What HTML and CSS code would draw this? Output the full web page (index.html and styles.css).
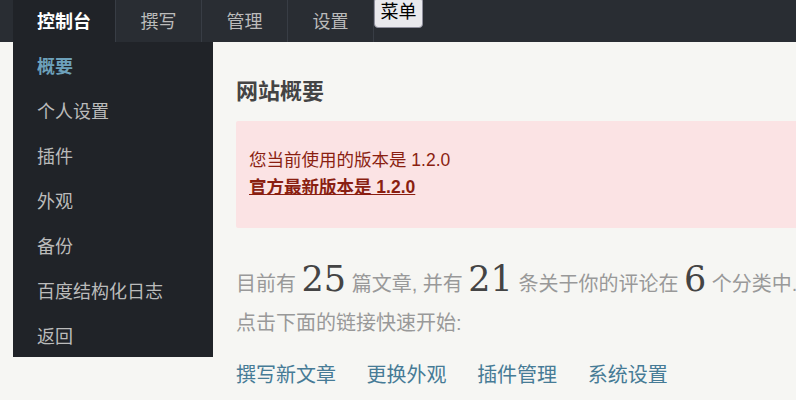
FILE: index.html
```html
<!DOCTYPE html>
<html lang="zh-CN">
<head>
<meta charset="utf-8">
<title>控制台</title>
<link rel="stylesheet" href="styles.css">
</head>
<body>
<header class="head-nav">
  <nav class="tabs">
    <a class="tab focus" href="#">控制台</a>
    <a class="tab" href="#">撰写</a>
    <a class="tab" href="#">管理</a>
    <a class="tab" href="#">设置</a>
  </nav>
  <button class="menu-btn" type="button">菜单</button>
</header>
<div class="layout">
  <ul class="dropdown">
    <li class="item focus"><a href="#">概要</a></li>
    <li class="item"><a href="#">个人设置</a></li>
    <li class="item"><a href="#">插件</a></li>
    <li class="item"><a href="#">外观</a></li>
    <li class="item"><a href="#">备份</a></li>
    <li class="item"><a href="#">百度结构化日志</a></li>
    <li class="item"><a href="#">返回</a></li>
  </ul>
  <main class="content">
    <h2 class="title">网站概要</h2>
    <div class="message">
      <p class="msg-line">您当前使用的版本是 1.2.0</p>
      <p class="msg-line"><a class="msg-link" href="#">官方最新版本是 1.2.0</a></p>
    </div>
    <p class="stats">目前有 <em class="num">25</em> 篇文章, 并有 <em class="num">21</em> 条关于你的评论在 <em class="num">6</em> 个分类中.<br>点击下面的链接快速开始:</p>
    <div class="quick-links">
      <a class="quick" href="#">撰写新文章</a>
      <a class="quick" href="#">更换外观</a>
      <a class="quick" href="#">插件管理</a>
      <a class="quick" href="#">系统设置</a>
    </div>
  </main>
</div>
</body>
</html>
```
FILE: styles.css
```css
html, body {
  margin: 0;
  padding: 0;
  overflow: hidden;
}
body {
  background: #f6f6f3;
  font-family: "Liberation Sans", "Noto Sans CJK SC", sans-serif;
  color: #444;
  width: 796px;
  height: 400px;
}
a { text-decoration: none; }

.head-nav {
  height: 42px;
  background: #292d33;
  display: flex;
  align-items: flex-start;
  padding-left: 13px;
}
.tabs {
  display: flex;
  height: 42px;
}
.tab {
  display: block;
  height: 42px;
  line-height: 40px;
  padding: 2px 24.5px 0;
  box-sizing: border-box;
  font-size: 18px;
  color: #bbb;
  border-right: 1px solid #383d45;
}
.tab:first-child {
  padding: 2px 24px 0;
}
.tab.focus {
  background: #202328;
  color: #fff;
  font-weight: bold;
}
.menu-btn {
  margin-top: -3px;
  height: 31px;
  padding: 2px 5.5px;
  font-family: "Liberation Sans", "Noto Sans CJK SC", sans-serif;
  font-size: 18px;
  line-height: 25px;
  color: #000;
  background: #e9e9ed;
  border: 1px solid #8f8f9d;
  border-radius: 4px;
}

.layout {
  position: relative;
}
.dropdown {
  position: absolute;
  top: 0;
  left: 13px;
  width: 200px;
  margin: 0;
  padding: 0;
  list-style: none;
  background: #202328;
}
.item a {
  display: block;
  height: 45px;
  box-sizing: border-box;
  padding: 6px 0 0 24px;
  line-height: 39px;
  font-size: 18px;
  color: #bbb;
}
.item.focus a {
  color: #6da1bb;
  font-weight: bold;
}

.content {
  margin-left: 236px;
  width: 640px;
  padding-top: 35px;
}
.title {
  margin: 0 0 14px;
  font-size: 22px;
  line-height: 30px;
  font-weight: bold;
  color: #444;
}
.message {
  background: #fbe3e4;
  color: #8a1f11;
  border-radius: 2px;
  padding: 26px 13px 27px;
  font-size: 17.5px;
  line-height: 27px;
}
.msg-line { margin: 0; }
.msg-link {
  color: #8a1f11;
  font-weight: bold;
  text-decoration: underline;
}
.stats {
  margin: 36.5px 0 0;
  font-size: 20px;
  line-height: 39px;
  color: #999;
}
.num {
  font-family: "DejaVu Serif", serif;
  font-style: normal;
  font-size: 35px;
  line-height: 0;
  color: #444;
}
.quick-links {
  margin-top: 17px;
  font-size: 20px;
  line-height: 30px;
}
.quick {
  color: #467b96;
  margin-right: 25px;
}
```
